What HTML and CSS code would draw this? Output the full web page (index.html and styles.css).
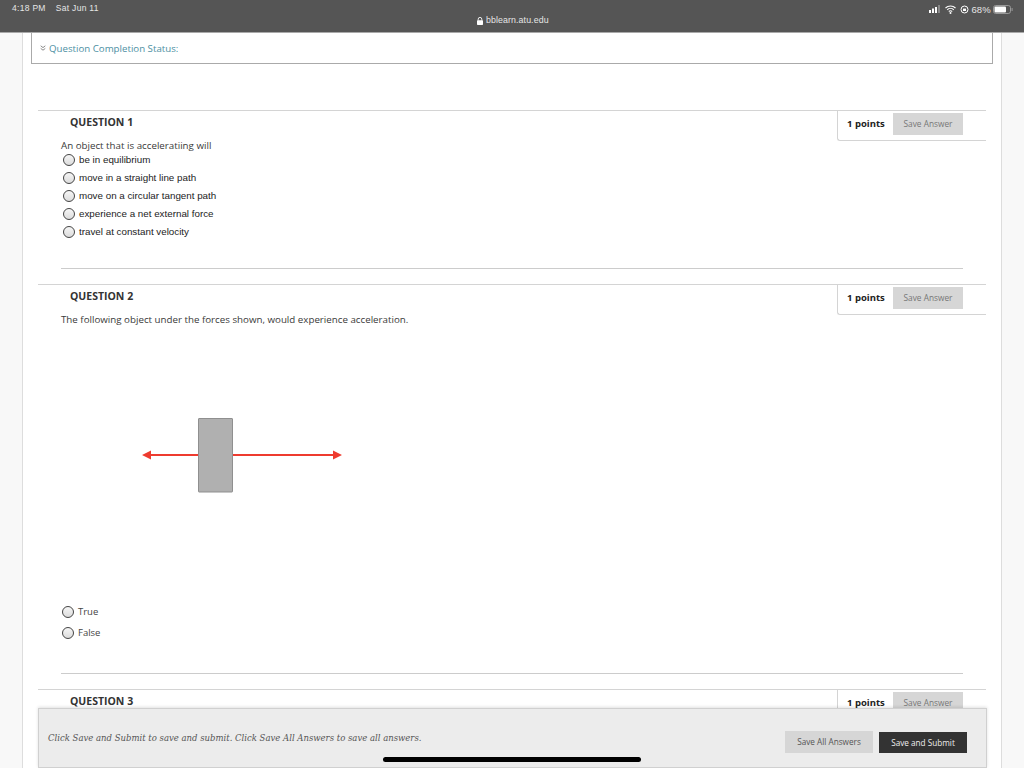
FILE: index.html
```html
<!DOCTYPE html>
<html lang="en">
<head>
<meta charset="utf-8">
<title>Test</title>
<link rel="stylesheet" href="styles.css">
</head>
<body>
<header class="topbar">
  <div class="clock"><span>4:18 PM</span><span>Sat Jun 11</span></div>
  <div class="url">
    <svg class="lock" width="6" height="8" viewBox="0 0 6 8"><path d="M1.200 3.500V2.200a1.800 1.800 0 0 1 3.600 0v1.300" fill="none" stroke="#fff" stroke-width=".9"/><rect x="0" y="3.300" width="6" height="4.700" rx=".7" fill="#fff"/></svg>
    <span>bblearn.atu.edu</span>
  </div>
  <div class="sys">
    <svg width="12" height="9" viewBox="0 0 12 9"><rect x="0" y="5" width="2" height="3" fill="#fff"/><rect x="3" y="3.500" width="2" height="4.500" fill="#fff"/><rect x="6" y="2" width="2" height="6" fill="#fff"/><rect x="9" y="0" width="2" height="8" fill="#888"/></svg>
    <svg width="11" height="9" viewBox="0 0 11 9"><path d="M.5 3a7.300 7.300 0 0 1 10 0M2.200 4.800a4.900 4.900 0 0 1 6.600 0M3.800 6.500a2.600 2.600 0 0 1 3.400 0" fill="none" stroke="#fff" stroke-width="1.100"/><circle cx="5.500" cy="8" r="1" fill="#fff"/></svg>
    <svg width="9" height="9" viewBox="0 0 9 9"><circle cx="4.500" cy="4.500" r="3.500" fill="none" stroke="#fff"/><rect x="3" y="3.600" width="3" height="2.400" fill="#fff"/></svg>
    <span class="pct">68%</span>
    <svg width="20" height="9" viewBox="0 0 20 9"><rect x=".5" y=".5" width="17" height="8" rx="2.200" fill="none" stroke="#999"/><rect x="1.500" y="1.500" width="11.500" height="6" rx="1" fill="#fff"/><rect x="18.600" y="3" width="1" height="3" fill="#999"/></svg>
  </div>
</header>

<main class="sheet">
  <div class="status">
    <svg class="chev" width="6" height="6" viewBox="0 0 6 6"><path d="M.7.8 3 2.600 5.300.8M.7 3.400 3 5.200l2.300-1.800" fill="none" stroke="#8a8a8a"/></svg>
    <span>Question Completion Status:</span>
  </div>

  <section class="question q1">
    <div class="qhead">
      <h2>QUESTION 1</h2>
      <div class="pts"><strong>1 points</strong><button class="save">Save Answer</button></div>
    </div>
    <div class="qbody">
      <p class="prompt">An object that is acceleratiing will</p>
      <ul class="opts arial">
        <li><i class="radio"></i><span>be in equilibrium</span></li>
        <li><i class="radio"></i><span>move in a straight line path</span></li>
        <li><i class="radio"></i><span>move on a circular tangent path</span></li>
        <li><i class="radio"></i><span>experience a net external force</span></li>
        <li><i class="radio"></i><span>travel at constant velocity</span></li>
      </ul>
    </div>
    <hr class="rule">
  </section>

  <section class="question q2">
    <div class="qhead">
      <h2>QUESTION 2</h2>
      <div class="pts"><strong>1 points</strong><button class="save">Save Answer</button></div>
    </div>
    <div class="qbody">
      <p class="prompt">The following object under the forces shown, would experience acceleration.</p>
      <svg class="figure" width="300" height="276" viewBox="0 0 300 276">
        <rect x="137.500" y="93.500" width="34" height="73.500" rx=".5" fill="#b0b0b0" stroke="#8f8f8f"/>
        <path d="M90 130H137M172 130H272" stroke="#ee3b2f" stroke-width="2"/>
        <path d="M81 130l9-4.500v9zM281 130l-9-4.500v9z" fill="#ee3b2f"/>
      </svg>
      <ul class="opts tf">
        <li><i class="radio"></i><span>True</span></li>
        <li><i class="radio"></i><span>False</span></li>
      </ul>
    </div>
    <hr class="rule">
  </section>

  <section class="question">
    <div class="qhead">
      <h2>QUESTION 3</h2>
      <div class="pts"><strong>1 points</strong><button class="save">Save Answer</button></div>
    </div>
  </section>
</main>

<footer class="submit">
  <em>Click Save and Submit to save and submit. Click Save All Answers to save all answers.</em>
  <div class="actions">
    <button class="all">Save All Answers</button>
    <button class="go">Save and Submit</button>
  </div>
</footer>
<div class="home"></div>
</body>
</html>
```
FILE: styles.css
```css
* { box-sizing: border-box; }
html, body { margin: 0; height: 768px; overflow: hidden; }
body { background: #f8f8f8; font-family: "Open Sans", sans-serif; color: #333; position: relative; }

.topbar { height: 33px; background: #555; border-bottom: 1px solid #a9a9a9; color: #e6e6e6; font-size: 8.500px; display: flex; position: relative; font-family: "Liberation Sans", sans-serif; }
.clock { display: flex; gap: 10px; padding: 3px 0 0 12px; letter-spacing: .3px; line-height: 11px; }
.url { position: absolute; left: 477px; top: 15px; display: flex; align-items: center; gap: 3px; font-size: 8.800px; line-height: 11px; letter-spacing: .1px; }
.sys { margin-left: auto; display: flex; align-items: center; gap: 4px; height: 10px; margin-top: 4px; padding-right: 11px; }
.pct { font-size: 9.500px; margin: 0 -2px; letter-spacing: .2px; }

.sheet { margin: 0 22px; height: 735px; background: #fff; border: solid #ddd; border-width: 0 1px; overflow: hidden; }

.status { height: 31px; margin: 0 8px; border: 1px solid #aaa; border-top: 0; display: flex; align-items: center; gap: 3px; padding: 0 0 0 8px; font-size: 9.700px; color: #4d8fa3; }
.chev { flex: none; }

.question { margin: 46px 15px 0; }
.q1 { height: 174px; }
.q2 { height: 405px; margin-top: 0; }
.q1 + .q2 + .question { margin-top: 0; }

.qhead { height: 31px; border-top: 1px solid #d4d4d4; display: flex; justify-content: space-between; }
h2 { margin: 0; padding: 4px 0 0 32px; font-size: 10.500px; line-height: 14px; font-weight: 700; color: #333; }
.pts { width: 149px; height: 31px; margin-top: -1px; border: solid #d4d4d4; border-width: 1px 0 1px 1px; border-bottom-left-radius: 3px; display: flex; align-items: flex-start; padding: 2px 23px 0 9px; justify-content: space-between; }
.pts strong { font-size: 9.500px; line-height: 22px; color: #222; }
.save { width: 70px; height: 22px; border: 0; padding: 0; background: #d6d6d6; color: #777; font: 8.300px/22px "Open Sans", sans-serif; }

.qbody { padding-left: 23px; }
.prompt { margin: 0; font-size: 9.750px; line-height: 10px; height: 10px; color: #3a3a3a; }
.opts { list-style: none; margin: 0; padding: 0; font-size: 9px; color: #222; }
.arial { font-family: "Liberation Sans", sans-serif; font-size: 9.800px; }
.arial span { margin-bottom: 2px; }
.opts li { height: 18px; display: flex; align-items: center; gap: 4px; padding-left: 2px; }
.radio { width: 12px; height: 12px; flex: none; border-radius: 50%; border: 1px solid #444; background: linear-gradient(#f6f6f6, #dcdcdc); }

.q1 .qbody { height: 127px; }

.q2 .qbody { height: 358px; }
.figure { display: block; }
.tf li { height: 21px; gap: 4px; font-size: 9.500px; color: #444; padding-left: 1px; }

.rule { margin: 0 23px; border: 0; border-top: 1px solid #ccc; height: 0; }

.submit { position: absolute; left: 38px; top: 708px; width: 949px; height: 60px; background: #ececec; border: 1px solid #d0d0d0; box-shadow: 0 -1px 3px rgba(0,0,0,.12); display: flex; align-items: center; justify-content: space-between; padding: 0 19px 0 9px; }
.submit em { font-family: "DejaVu Serif", serif; font-size: 8.500px; color: #555; }
.actions { display: flex; gap: 6px; align-items: flex-start; margin-top: 7px; }
.actions button { border: 0; padding: 0; font: 8.200px/21px "Open Sans", sans-serif; }
.all { width: 88px; height: 22px; background: #d6d6d6; color: #555; }
.go { width: 88px; height: 21px; margin-top: 1px; background: #333; color: #eee; }

.home { position: absolute; left: 383px; top: 757px; width: 258px; height: 5px; border-radius: 3px; background: #000; }
```
